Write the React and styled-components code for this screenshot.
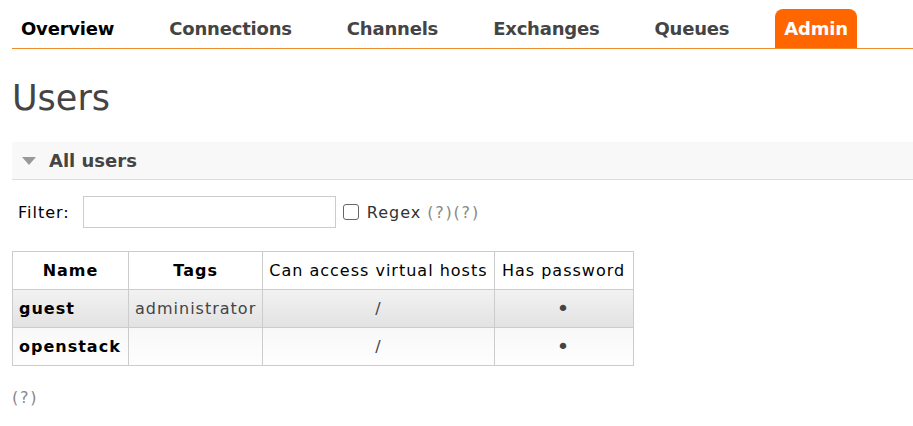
import styled, { createGlobalStyle } from "styled-components";

const GlobalStyle = createGlobalStyle`
  body {
    margin: 0;
    background: #fff;
    font-family: "DejaVu Sans", Verdana, sans-serif;
    font-size: 16px;
    letter-spacing: 1px;
    color: #000;
  }
`;

const Page = styled.div`
  padding: 0 0 0 12px;
`;

const Menu = styled.ul`
  display: flex;
  list-style: none;
  margin: 9px 0 0 0;
  padding: 0;
  border-bottom: 1px solid #f08c2c;
`;

const MenuItem = styled.li`
  height: 39px;
  box-sizing: border-box;
  padding: 0 9px;
  margin-right: 37px;
  display: flex;
  align-items: center;
  font-weight: bold;
  font-size: 18px;
  letter-spacing: -0.2px;
  color: ${(p) => (p.active ? "#fff" : p.first ? "#000" : "#444")};
  background: ${(p) => (p.active ? "#ff6600" : "transparent")};
  border-radius: 8px 8px 0 0;
`;

const Title = styled.h1`
  margin: 28px 0 0 0;
  font-size: 35px;
  font-weight: normal;
  letter-spacing: 0;
  color: #444;
  line-height: 42px;
`;

const Section = styled.div`
  margin-top: 23px;
`;

const SectionHeader = styled.div`
  display: flex;
  align-items: center;
  height: 37px;
  background: #f8f8f8;
  border-bottom: 1px solid #ddd;
  padding-left: 10px;
  font-size: 18px;
  letter-spacing: 0;
  font-weight: bold;
  color: #444;
`;

const Arrow = styled.span`
  width: 0;
  height: 0;
  border-left: 7px solid transparent;
  border-right: 7px solid transparent;
  border-top: 8px solid #999;
  margin-right: 13px;
`;

const FilterRow = styled.div`
  display: flex;
  align-items: center;
  margin-top: 16px;
  padding-left: 6px;
`;

const Label = styled.span`
  margin-right: 13px;
`;

const TextInput = styled.input`
  width: 253px;
  height: 32px;
  box-sizing: border-box;
  border: 1px solid #ccc;
  margin: 0 7px 0 0;
`;

const Check = styled.span`
  width: 14px;
  height: 14px;
  border: 1px solid #666;
  border-radius: 3px;
  margin-right: 8px;
`;

const Regex = styled.span`
  color: #333;
  margin-right: 6px;
`;

const Help = styled.span`
  color: #888;
  letter-spacing: 1.8px;
`;

const Table = styled.table`
  border-collapse: collapse;
  margin-top: 23px;
`;

const Th = styled.th`
  border: 1px solid #ccc;
  height: 38px;
  box-sizing: border-box;
  padding: 0 6px;
  font-weight: ${(p) => (p.bold ? "bold" : "normal")};
  width: ${(p) => p.w}px;
  white-space: nowrap;
`;

const Row = styled.tr`
  background: ${(p) =>
    p.alt
      ? "linear-gradient(#f8f8f8, #fefefe)"
      : "linear-gradient(#f2f2f2, #e2e2e2)"};
`;

const Td = styled.td`
  border: 1px solid #ccc;
  height: 38px;
  box-sizing: border-box;
  padding: 0 6px;
  text-align: ${(p) => p.align || "left"};
  font-weight: ${(p) => (p.bold ? "bold" : "normal")};
  color: ${(p) => p.color || "#000"};
`;

const Dot = styled.span`
  font-size: 22px;
  line-height: 1;
  color: #444;
`;

const Footer = styled.div`
  margin-top: 22px;
`;

const tabs = ["Overview", "Connections", "Channels", "Exchanges", "Queues", "Admin"];

const users = [
  { name: "guest", tags: "administrator", vhosts: "/" },
  { name: "openstack", tags: "", vhosts: "/" },
];

export default function App() {
  return (
    <Page>
      <GlobalStyle />
      <Menu>
        {tabs.map((t, i) => (
          <MenuItem key={t} active={t === "Admin"} first={i === 0}>
            {t}
          </MenuItem>
        ))}
      </Menu>
      <Title>Users</Title>
      <Section>
        <SectionHeader>
          <Arrow />
          All users
        </SectionHeader>
        <FilterRow>
          <Label>Filter:</Label>
          <TextInput />
          <Check />
          <Regex>Regex</Regex>
          <Help>(?)(?)</Help>
        </FilterRow>
        <Table>
          <thead>
            <tr>
              <Th bold w={116}>Name</Th>
              <Th bold w={134}>Tags</Th>
              <Th w={231}>Can access virtual hosts</Th>
              <Th w={139}>Has password</Th>
            </tr>
          </thead>
          <tbody>
            {users.map((u, i) => (
              <Row key={u.name} alt={i % 2 === 1}>
                <Td bold>{u.name}</Td>
                <Td color="#444">{u.tags}</Td>
                <Td align="center" color="#444">{u.vhosts}</Td>
                <Td align="center">
                  <Dot>•</Dot>
                </Td>
              </Row>
            ))}
          </tbody>
        </Table>
        <Footer>
          <Help>(?)</Help>
        </Footer>
      </Section>
    </Page>
  );
}
